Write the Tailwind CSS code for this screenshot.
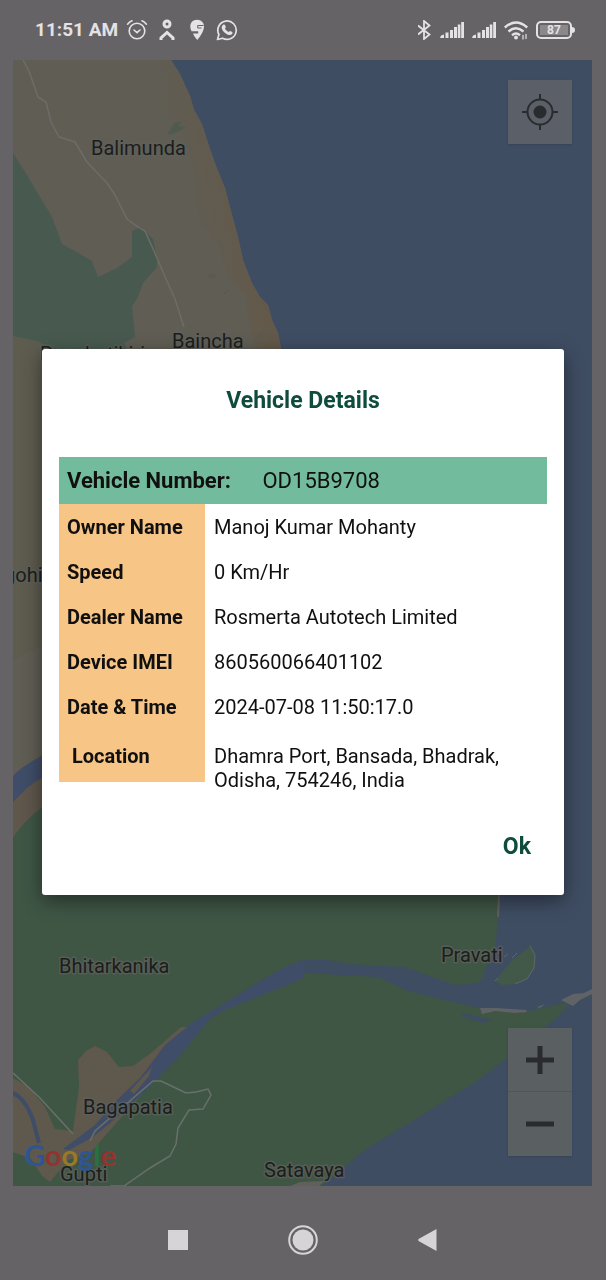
<!DOCTYPE html>
<html lang="en">
<head>
    <meta charset="UTF-8">
    <meta name="viewport" content="width=device-width, initial-scale=1.0">
    <title>Vehicle Details</title>
    <script src="https://cdn.jsdelivr.net/npm/@tailwindcss/browser@4"></script>
</head>
<body class="bg-[#666366] font-['Roboto',sans-serif]">

    <div class="min-h-screen flex flex-col">

        <!-- Status bar -->
        <header class="h-[60px] shrink-0 flex items-center justify-between pl-[35px] pr-[31px] text-[#e4e2e4]">
            <div class="flex items-center gap-2">
                <span class="text-[19px] font-bold">11:51 AM</span>
                <svg class="w-[22px] h-[22px]" viewBox="0 0 22 22" fill="none" stroke="currentColor" stroke-width="1.6" stroke-linecap="round">
                    <circle cx="11" cy="12" r="7.8"/>
                    <path d="M1.6 5.2Q3.4 2.8 6 1.8M20.4 5.2Q18.6 2.8 16 1.8M8 11l3 2.600 3-2.600"/>
                </svg>
                <svg class="w-[22px] h-[22px]" viewBox="0 0 22 22" fill="none" stroke="currentColor">
                    <circle cx="11" cy="5" r="3" stroke-width="3"/>
                    <path d="M5 21v-2l6-5.500 6 5.500v2" stroke-width="3"/>
                </svg>
                <svg class="w-[22px] h-[22px]" viewBox="0 0 22 22">
                    <path fill="currentColor" d="M11 .8c4.400 0 7 3 7 6.400 0 5-3.600 10-6.700 13.800-2-2.300-3.500-4.500-4.300-6.500h5.200v-2.300H5.600C4.600 10.600 4.300 8.800 4.300 7.300 4.300 3.600 7.200.8 11 .8z"/>
                    <path d="M17.500 6.500h-5.800v2.500h3.800" fill="none" stroke="#666366" stroke-width="1"/>
                </svg>
                <svg class="w-[22px] h-[22px]" viewBox="0 0 22 22">
                    <path d="M1.500 20.500l1.400-5A9.200 9.200 0 1 1 6.500 19.200z" fill="none" stroke="currentColor" stroke-width="1.700" stroke-linejoin="round"/>
                    <path fill="currentColor" d="M7.200 5.800c.8-.6 1.500-.4 1.800.3l.8 1.900c.2.600-.7 1.200-.9 1.600.8 1.600 2 2.700 3.700 3.500.5-.3 1-1.300 1.600-1.100l2 1c.5.300.4 1.400-.1 2-1 1.200-2.700 1.400-4.800.4-2.600-1.200-4.600-3.200-5.400-5.600-.5-1.600 0-3.100 1.300-4z"/>
                </svg>
            </div>
            <div class="flex items-center gap-2">
                <svg class="w-[14px] h-[20px]" viewBox="0 0 14 20" fill="none" stroke="currentColor" stroke-width="1.800">
                    <path d="M0 5.500l11.500 9L6 19V1l5.500 4.500-11.500 9"/>
                </svg>
                <svg class="w-6 h-[18px]" viewBox="0 0 24 18" fill="currentColor">
                    <path d="M0 17l1-2.500 3-1V17zM5.500 17v-5.500h3V17zM10 17V9h3v8zM14 17V6h3v11zM17.800 17V3.500h2.600V17zM21.200 17V1H24v16z"/>
                </svg>
                <svg class="w-6 h-[18px]" viewBox="0 0 24 18" fill="currentColor">
                    <path d="M0 17l1-2.500 3-1V17zM5.500 17v-5.500h3V17zM10 17V9h3v8zM14 17V6h3v11zM17.800 17V3.500h2.600V17zM21.200 17V1H24v16z"/>
                </svg>
                <svg class="w-6 h-5" viewBox="0 0 24 20" fill="none" stroke="currentColor" stroke-width="2.400">
                    <path d="M.8 7.500Q12-2.500 23.200 7.500M4.500 11.500q7.500-6.500 15 0M8 15.200q4-3.200 8 0"/>
                    <circle cx="12" cy="17.500" r="2" fill="currentColor" stroke="none"/>
                    <path d="M19 19.500v-4.500M22 14v5" stroke-width="1.200"/>
                </svg>
                <div class="flex items-center">
                    <div class="w-9 h-[18px] rounded-[5px] border-2 border-current p-[2px]">
                        <div class="h-full bg-[#8a888a] flex items-center justify-center text-[12px] font-bold">87</div>
                    </div>
                    <div class="w-[3px] h-[6px] rounded-r bg-current"></div>
                </div>
            </div>
        </header>

        <!-- Map -->
        <main class="relative flex-1 ml-[13px] mr-[14px] overflow-hidden bg-[#3f4d63]">
            <svg class="absolute inset-0 w-full h-full" viewBox="13 60 579 1126" preserveAspectRatio="xMidYMid slice" role="img" aria-label="Map of the coast near Bhitarkanika">
                <defs>
                    <linearGradient id="beach" x1="0" x2="1" y1="0.400" y2="0">
                        <stop offset="0.200" stop-color="#605d54"/>
                        <stop offset="0.600" stop-color="#63594a"/>
                    </linearGradient>
                </defs>
                <!-- land -->
                <path fill="#605d54" d="M13 60H171l9 14 10 22 4 14 8 14 7 22 7 20 9 22 6 23 7 26 5 23 9 23 8 14 8 8 4 15 6 13 4 20L400 620 500 900 13 900z"/>
                <!-- beach -->
                <path fill="url(#beach)" d="M146 60h25l9 14 10 22 4 14 8 14 7 22 7 20 9 22 6 23 7 26 5 23 9 23 8 14 8 8 4 15 6 13 4 20h-25l-9-32-2-25-16-16-12-35-9-12-10-12-2-18-4-36-9-28-15-20-10-32-7-30z"/>
                <path fill="#4f5b50" d="M167 135l7-12 8-2-4 5 8 1-10 6z"/>
                <path fill="#585b4f" d="M207 275l7-1 2 3-6 1zM222 293l8-4-4 5zM256 337l8-7-1 6z"/>
                <!-- forest, north -->
                <path fill="#485a4f" d="M13 153l12 19 15 25 12 20 10 27 11 6 19 11 6 16 19-9 15-11v-26l9-4 12 12 4 20v8l-14 16-6 16-5 7 3 31-11 6 5 14-8 11-60 8-58-21z"/>
                <path fill="#5e5c4f" d="M13 336l27 6 12 10V640l-39 20z"/>
                <path fill="none" stroke="#6d6c68" stroke-width="1.500" d="M23 60l6 11 9 26 8 5 5 20 8 15 16 5 12 20 20 21 8 12 12 24 8 6 10 6 9 20 12 28 9 20 9 28"/>
                <!-- river behind the dialog and its bank -->
                <path fill="#5f574c" d="M13 790l40-28v100H13z"/>
                <path fill="#3f4d68" d="M13 776q8-10 40-26v24q-20 6-32 20l-8 8z"/>
                <!-- forest, south -->
                <path fill="#3f5645" d="M13 838q12-20 40-38L470 800l28 95 -1 35-2 20-12 24 8 18-12 20 50 -1 25-6 13-2-1 6-40 35-48 36-54 34-58 35-48 40-6 3-5 9H13z"/>
                <path fill="#625f5d" d="M498 895h6l-5 23-2-2z"/>
                <!-- village land around the river mouth -->
                <path fill="#5e584d" d="M13 1078l16 9 16 20 10 22 18 2 6-44-1-27 8-9 9-5 12 6 12 15 14-1 18-13 30-26 14 0-54 68-37 42-14 16-22 7-18 22-8-6-12-18-27-9z"/>
                <path fill="#3f4d68" d="M303 960l-18 7-25 14-32 20-35 21-28 23-24 32-24 23-22 25-32 24 6 1 24-13 29-24 28-27 32-33 27-33 13-9 38-15 43-18z"/>
                <path fill="#5e584d" d="M152 1067l-22 24 4 3 15-18z"/>
                <path fill="#3f4d63" d="M303 960h24l23 4 55 3 30 11 20 7 22-2 12-10 9-24 2-55H592v92l-15 11-32 5-12 7h-50l-43-10-32-8-30-14-75-4z"/>
                <path fill="none" stroke="#3f4d68" stroke-width="4" d="M13 1093q12 5 20 27l6 23"/>
                <path fill="#3f4d63" d="M459 1012l17 4 16 4-8 3-16-4z"/>
                <path fill="#425849" d="M495 981l17-21 11-8 7-6 5 8-1 14-7 11-12 5-13 1z"/>
                <path fill="none" stroke="#5f6866" stroke-width="1" d="M530 946l5 9-1 13-7 11-12 5M504 957l4-3M512 958l5-5M495 981l3-3"/>
                <path fill="#606366" d="M480 1008h16l30 2 1 2-12 1-20-2-13 3zM537 1007l8-3-5 4zM561 1000l12-6 11-1 8-4v5l-12 6-7 6z"/>
                <path fill="#625f5d" d="M290 1186l10-4 25-1-6 5z"/>
                <path fill="none" stroke="#68706a" stroke-width="1.500" d="M13 1073l26 24 34 37M90 1141l5-10 58-50 8 0 25 12 10-1 12-3 3 6-8 14-14 1-11 18-2 16-6 12-20 12-26 18h-14"/>

                <!-- place names -->
                <g font-size="20" fill="#1c1d1d" stroke="#5f625c" stroke-width="3" stroke-opacity="0.700" paint-order="stroke" stroke-linejoin="round">
                    <text x="91" y="155">Balimunda</text>
                    <text x="172" y="348">Baincha</text>
                    <text x="40" y="361">Panchutikiri</text>
                    <text x="4" y="582">gohira</text>
                    <text x="59" y="973">Bhitarkanika</text>
                    <text x="441" y="962">Pravati</text>
                    <text x="83" y="1114">Bagapatia</text>
                    <text x="60" y="1181">Gupti</text>
                    <text x="264" y="1177">Satavaya</text>
                </g>
                <text x="24" y="1166" font-family="Lato, sans-serif" font-size="29" font-weight="700"><tspan fill="#2f5594">G</tspan><tspan fill="#94332f">o</tspan><tspan fill="#987a24">o</tspan><tspan fill="#2f5594">g</tspan><tspan fill="#2a7040">l</tspan><tspan fill="#94332f">e</tspan></text>
            </svg>

            <button type="button" aria-label="My location" class="absolute top-5 right-5 w-16 h-16 flex items-center justify-center bg-[#5b6068] text-[#292b2e] shadow">
                <svg class="w-9 h-9" viewBox="0 0 36 36" fill="none" stroke="currentColor" stroke-width="2">
                    <circle cx="18" cy="18" r="12.500"/>
                    <circle cx="18" cy="18" r="6.500" fill="currentColor" stroke="none"/>
                    <path d="M18 0v6M18 30v6M0 18h6M30 18h6"/>
                </svg>
            </button>

            <div class="absolute bottom-[30px] right-5 w-16 flex flex-col divide-y divide-[#50555a] bg-[#5a5f62] text-[#292b2e] shadow">
                <button type="button" aria-label="Zoom in" class="h-16 flex items-center justify-center">
                    <svg class="w-[30px] h-[30px]" viewBox="0 0 30 30" stroke="currentColor" stroke-width="5"><path d="M1 15h28M15 1v28"/></svg>
                </button>
                <button type="button" aria-label="Zoom out" class="h-16 flex items-center justify-center">
                    <svg class="w-[30px] h-[30px]" viewBox="0 0 30 30" stroke="currentColor" stroke-width="5"><path d="M1 15h28"/></svg>
                </button>
            </div>
        </main>

        <!-- Navigation bar -->
        <nav class="h-[94px] shrink-0 flex items-center justify-center gap-[100px] pt-[14px] text-[#d6d4d6]">
            <button type="button" aria-label="Recent apps">
                <svg class="w-5 h-5" viewBox="0 0 20 20" fill="currentColor"><path d="M0 0h20v20H0z"/></svg>
            </button>
            <button type="button" aria-label="Home">
                <svg class="w-[30px] h-[30px]" viewBox="0 0 30 30" fill="currentColor">
                    <circle cx="15" cy="15" r="13.800" fill="none" stroke="currentColor" stroke-width="2"/>
                    <circle cx="15" cy="15" r="10.500"/>
                </svg>
            </button>
            <button type="button" aria-label="Back">
                <svg class="w-5 h-[22px]" viewBox="0 0 20 22" fill="currentColor"><path d="M18.500 0v22L.5 12Q0 11 .5 10z"/></svg>
            </button>
        </nav>
    </div>

    <!-- Dialog -->
    <div class="fixed inset-0 flex items-center justify-center px-[42px] pb-9">
        <div role="dialog" aria-labelledby="dialogTitle" class="w-full bg-white rounded-[3px] shadow-[0_6px_20px_rgba(0,0,0,0.45)] px-[17px] pt-9 pb-8">
            <h1 id="dialogTitle" class="text-[23px] leading-8 font-bold text-center text-[#0f4c3e]">Vehicle Details</h1>

            <table class="mt-10 w-full text-left text-[20px] leading-6 text-[#101010]">
                <thead>
                    <tr class="h-[47px] bg-[#72bc9d]">
                        <th colspan="2" class="px-2 text-[22px]">
                            <span>Vehicle Number:</span>
                            <span class="ml-[26px] font-normal">OD15B9708</span>
                        </th>
                    </tr>
                </thead>
                <tbody>
                    <tr class="h-[45px]">
                        <th class="w-[146px] bg-[#f7c586] px-2">Owner Name</th>
                        <td class="px-[9px]">Manoj Kumar Mohanty</td>
                    </tr>
                    <tr class="h-[45px]">
                        <th class="bg-[#f7c586] px-2">Speed</th>
                        <td class="px-[9px]">0 Km/Hr</td>
                    </tr>
                    <tr class="h-[45px]">
                        <th class="bg-[#f7c586] px-2">Dealer Name</th>
                        <td class="px-[9px]">Rosmerta Autotech Limited</td>
                    </tr>
                    <tr class="h-[45px]">
                        <th class="bg-[#f7c586] px-2">Device IMEI</th>
                        <td class="px-[9px]">860560066401102</td>
                    </tr>
                    <tr class="h-[45px]">
                        <th class="bg-[#f7c586] px-2">Date &amp; Time</th>
                        <td class="px-[9px]">2024-07-08 11:50:17.0</td>
                    </tr>
                    <tr class="align-top">
                        <th><div class="bg-[#f7c586] px-[13px] pt-[15px] pb-[14px]">Location</div></th>
                        <td class="px-[9px] pt-[15px]">Dhamra Port, Bansada, Bhadrak, Odisha, 754246, India</td>
                    </tr>
                </tbody>
            </table>

            <div class="mt-[39px] flex justify-end pr-4">
                <button type="button" class="text-[23px] leading-8 font-bold text-[#0f4c3e]">Ok</button>
            </div>
        </div>
    </div>

</body>
</html>
